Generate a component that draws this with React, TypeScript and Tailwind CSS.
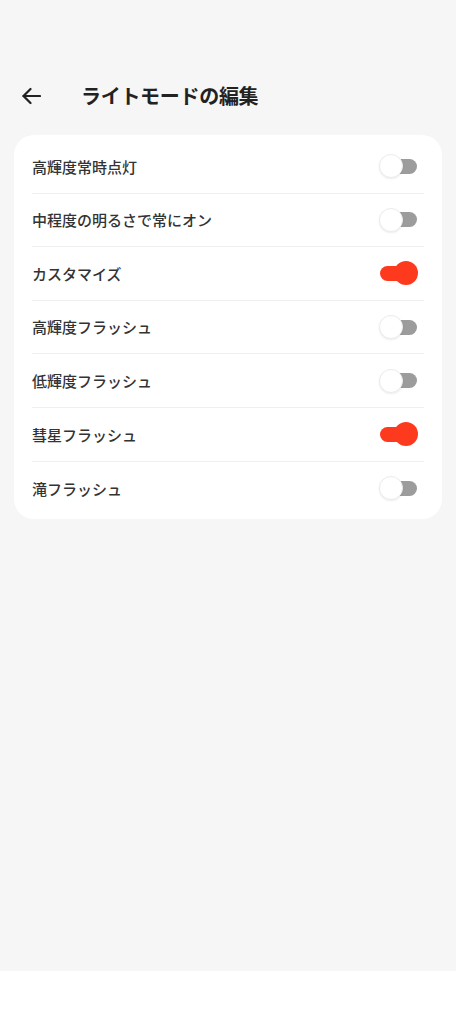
import React from "react";

const items: { label: string; on: boolean }[] = [
  { label: "高輝度常時点灯", on: false },
  { label: "中程度の明るさで常にオン", on: false },
  { label: "カスタマイズ", on: true },
  { label: "高輝度フラッシュ", on: false },
  { label: "低輝度フラッシュ", on: false },
  { label: "彗星フラッシュ", on: true },
  { label: "滝フラッシュ", on: false },
];

function Toggle({ on }: { on: boolean }) {
  return (
    <div className="relative w-[38px] h-[24px] mr-[7px] shrink-0">
      <div
        className={
          "absolute left-[1px] right-0 top-[4.5px] h-[15px] rounded-full " +
          (on ? "bg-[#fd3a1e]" : "bg-[#9c9c9c]")
        }
      />
      <div
        className={
          "absolute top-0 w-[24px] h-[24px] rounded-full " +
          (on
            ? "right-[-1px] bg-[#fd3a1e]"
            : "left-0 bg-white border border-[#ececec] shadow-[0_1px_2px_rgba(0,0,0,0.08)]")
        }
      />
    </div>
  );
}

export default function App() {
  return (
    <div
      className="w-[456px] min-h-[1024px] bg-white flex flex-col"
      style={{ fontFamily: '"Noto Sans", "Noto Sans CJK JP", sans-serif' }}
    >
      <div className="h-[971px] bg-[#f6f6f6] flex flex-col">
        <div className="flex items-center h-[40px] mt-[77px] pl-[22px]">
          <svg width="19" height="18" viewBox="0 0 19 18" fill="none" stroke="#222" strokeWidth="2.2" strokeLinecap="round" strokeLinejoin="round" className="mt-[-2px]">
            <path d="M18 9H1.5" />
            <path d="M8.5 2L1.5 9L8.5 16" />
          </svg>
          <div className="ml-[40px] text-[20px] font-bold text-[#222] leading-none tracking-[-0.3px]">
            ライトモードの編集
          </div>
        </div>
        <div className="mx-[14px] mt-[18px] bg-white rounded-[20px] pt-[5px] pb-[4px] px-[18px]">
          {items.map((it, i) => (
            <div
              key={i}
              className={
                "h-[53.6px] flex items-center justify-between " +
                (i < items.length - 1 ? "border-b border-[#efefef]" : "")
              }
            >
              <span className="text-[15px] font-medium text-[#333] pt-[1px]">{it.label}</span>
              <Toggle on={it.on} />
            </div>
          ))}
        </div>
      </div>
    </div>
  );
}
